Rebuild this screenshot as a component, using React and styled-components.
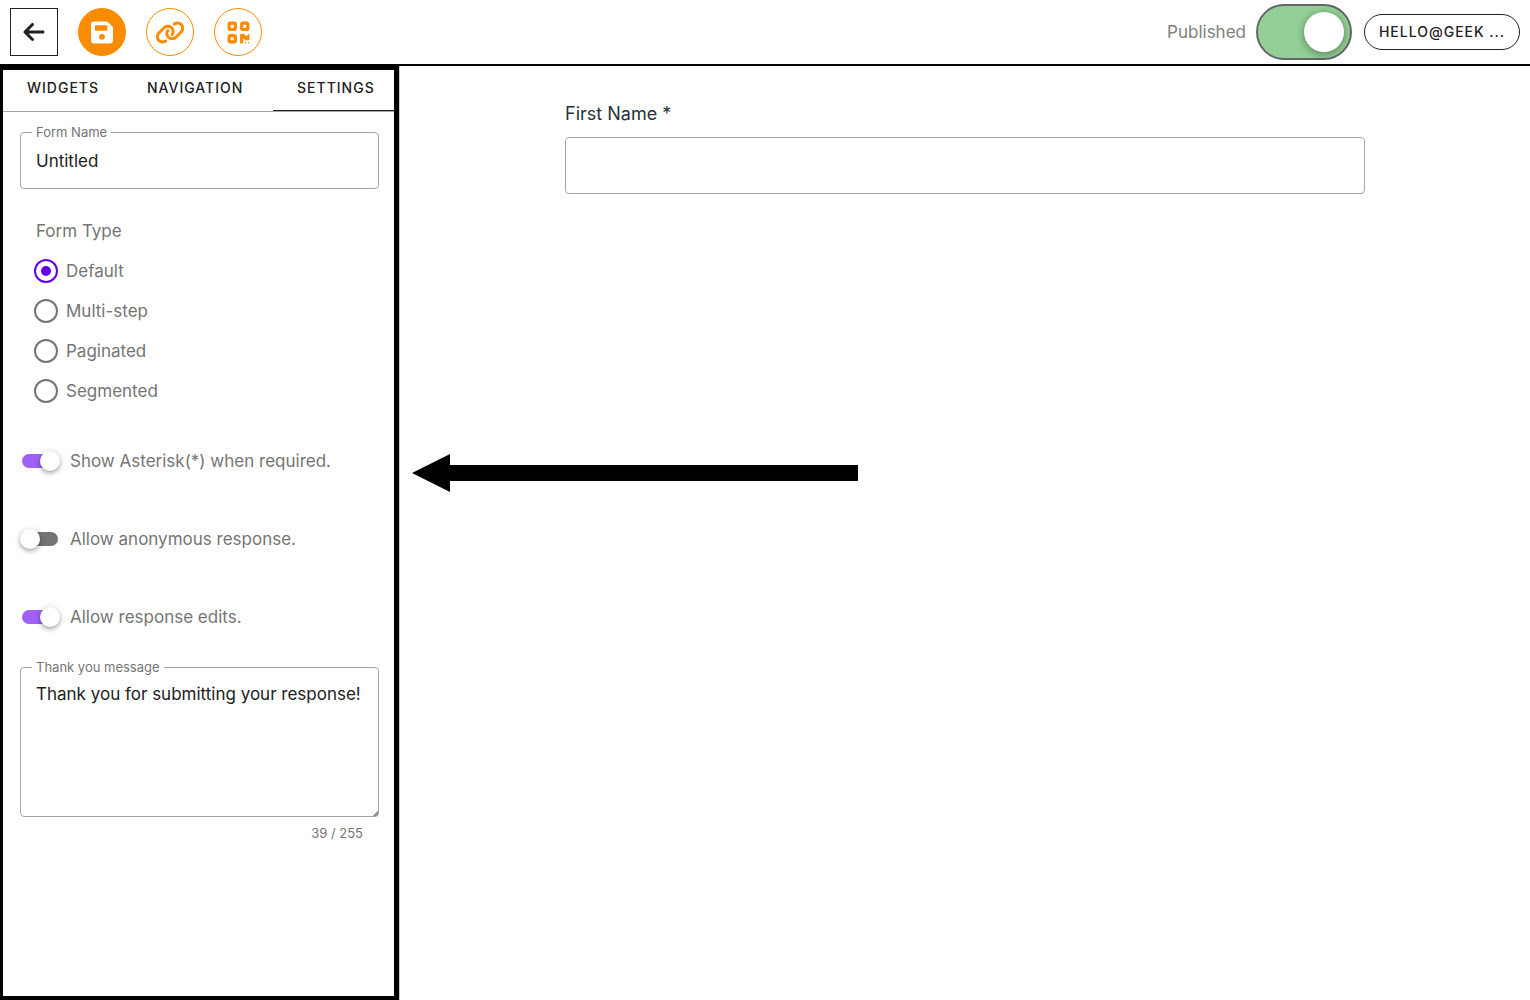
import { useState } from "react";
import styled, { createGlobalStyle } from "styled-components";
import { FaArrowLeft, FaLink, FaQrcode } from "react-icons/fa6";

const formTypes = ["Default", "Multi-step", "Paginated", "Segmented"];
const tabs = ["Widgets", "Navigation", "Settings"];
const MAX_MESSAGE = 255;

const SaveIcon = () => (
  <svg viewBox="0 0 22 22" fill="currentColor" aria-hidden="true">
    <path
      fillRule="evenodd"
      d="M3 0H16.2L22 5.6V19a3 3 0 0 1-3 3H3a3 3 0 0 1-3-3V3a3 3 0 0 1 3-3Z
        M4.6 3.8a.6.6 0 0 0-.6.6v4.2a.6.6 0 0 0 .6.6h11.2a.6.6 0 0 0 .6-.6V4.4a.6.6 0 0 0-.6-.6Z
        M11 12.4a2.9 2.9 0 1 0 0 5.8a2.9 2.9 0 1 0 0-5.8Z"
    />
  </svg>
);

const App = () => {
  const [tab, setTab] = useState("Settings");
  const [published, setPublished] = useState(true);
  const [name, setName] = useState("Untitled");
  const [formType, setFormType] = useState("Default");
  const [asterisk, setAsterisk] = useState(true);
  const [anonymous, setAnonymous] = useState(false);
  const [edits, setEdits] = useState(true);
  const [message, setMessage] = useState("Thank you for submitting your response!");

  return (
    <Page>
      <GlobalStyle />
      <Header>
        <Actions>
          <BackButton type="button" aria-label="Back">
            <FaArrowLeft />
          </BackButton>
          <RoundButton type="button" aria-label="Save" $filled $icon="22px">
            <SaveIcon />
          </RoundButton>
          <RoundButton type="button" aria-label="Copy link" $icon="30px">
            <FaLink />
          </RoundButton>
          <RoundButton type="button" aria-label="QR code" $icon="25px">
            <FaQrcode />
          </RoundButton>
        </Actions>
        <Account>
          <PublishLabel>
            Published
            <PublishSwitch
              type="checkbox"
              role="switch"
              checked={published}
              onChange={(e) => setPublished(e.target.checked)}
            />
          </PublishLabel>
          <AccountButton type="button">HELLO@GEEK ...</AccountButton>
        </Account>
      </Header>

      <Body>
        <Sidebar>
          <Tabs role="tablist">
            {tabs.map((t) => (
              <Tab
                key={t}
                type="button"
                role="tab"
                aria-selected={t === tab}
                $active={t === tab}
                onClick={() => setTab(t)}
              >
                {t}
              </Tab>
            ))}
          </Tabs>

          <Settings>
            <Outlined>
              <FloatingLabel htmlFor="form-name">Form Name</FloatingLabel>
              <TextInput
                id="form-name"
                type="text"
                value={name}
                onChange={(e) => setName(e.target.value)}
              />
            </Outlined>

            <RadioGroup role="radiogroup" aria-labelledby="form-type">
              <GroupTitle id="form-type">Form Type</GroupTitle>
              {formTypes.map((type) => (
                <RadioLabel key={type}>
                  <Radio
                    type="radio"
                    name="form-type"
                    checked={formType === type}
                    onChange={() => setFormType(type)}
                  />
                  {type}
                </RadioLabel>
              ))}
            </RadioGroup>

            <Switches>
              <SwitchLabel>
                <Switch
                  type="checkbox"
                  role="switch"
                  checked={asterisk}
                  onChange={(e) => setAsterisk(e.target.checked)}
                />
                Show Asterisk(*) when required.
              </SwitchLabel>
              <SwitchLabel>
                <Switch
                  type="checkbox"
                  role="switch"
                  checked={anonymous}
                  onChange={(e) => setAnonymous(e.target.checked)}
                />
                Allow anonymous response.
              </SwitchLabel>
              <SwitchLabel>
                <Switch
                  type="checkbox"
                  role="switch"
                  checked={edits}
                  onChange={(e) => setEdits(e.target.checked)}
                />
                Allow response edits.
              </SwitchLabel>
            </Switches>

            <Outlined>
              <FloatingLabel htmlFor="thanks">Thank you message</FloatingLabel>
              <TextArea
                id="thanks"
                maxLength={MAX_MESSAGE}
                value={message}
                onChange={(e) => setMessage(e.target.value)}
              />
            </Outlined>
            <Counter>
              {message.length} / {MAX_MESSAGE}
            </Counter>
          </Settings>
        </Sidebar>

        <Canvas>
          <Field>
            <FieldLabel htmlFor="first-name">First Name *</FieldLabel>
            <TextInput id="first-name" type="text" required />
          </Field>
          <Pointer viewBox="0 0 446 38" aria-hidden="true">
            <path d="M0 19 L38 0 V11 H446 V27 H38 V38 Z" />
          </Pointer>
        </Canvas>
      </Body>
    </Page>
  );
};

const GlobalStyle = createGlobalStyle`
  * {
    box-sizing: border-box;
  }
  body {
    margin: 0;
    background: #fff;
    color: #212121;
    font-family: Inter, sans-serif;
    font-size: 17px;
    line-height: 24px;
  }
  button, input, textarea {
    margin: 0;
    font: inherit;
    color: inherit;
  }
  button {
    cursor: pointer;
  }
`;

const Page = styled.div`
  display: flex;
  flex-direction: column;
  min-height: 100vh;
`;

const Header = styled.header`
  display: flex;
  align-items: center;
  justify-content: space-between;
  height: 66px;
  padding: 0 10px;
  border-bottom: 2px solid #000;
`;

const Actions = styled.div`
  display: flex;
  gap: 20px;
`;

const BackButton = styled.button`
  display: flex;
  align-items: center;
  justify-content: center;
  width: 48px;
  height: 48px;
  padding: 0;
  border: 1px solid #212121;
  background: #fff;
  font-size: 24px;
`;

const RoundButton = styled(BackButton)`
  border-color: #fb8c00;
  border-radius: 50%;
  background: ${(p) => (p.$filled ? "#fb8c00" : "#fff")};
  color: ${(p) => (p.$filled ? "#fff" : "#fb8c00")};

  svg {
    width: ${(p) => p.$icon};
    height: 25px;
  }
`;

const Account = styled.div`
  display: flex;
  align-items: center;
  gap: 12px;
`;

const PublishLabel = styled.label`
  display: flex;
  align-items: center;
  gap: 10px;
  color: #808080;
`;

const PublishSwitch = styled.input`
  appearance: none;
  display: flex;
  align-items: center;
  width: 96px;
  height: 56px;
  padding: 0 6px;
  border: 2px solid #666;
  border-radius: 28px;
  background: #ccc;

  &::before {
    content: "";
    width: 40px;
    height: 40px;
    border-radius: 50%;
    background: #fff;
    box-shadow: 0 2px 8px rgba(0, 0, 0, 0.4);
  }
  &:checked {
    justify-content: flex-end;
    background: #93cf96;
  }
`;

const AccountButton = styled.button`
  height: 36px;
  width: 156px;
  padding: 0;
  border: 1px solid #212121;
  border-radius: 18px;
  background: #fff;
  font-size: 14px;
  font-weight: 500;
  letter-spacing: 1px;
`;

const Body = styled.div`
  display: flex;
  flex: 1;
`;

const Sidebar = styled.aside`
  flex: none;
  width: 399px;
  border: solid #000;
  border-width: 4px 5px 4px 3px;
`;

const Tabs = styled.div`
  display: grid;
  grid-template-columns: 120px 150px 1fr;
  height: 42px;
  border-bottom: 1px solid #a6a6a6;
`;

const Tab = styled.button`
  padding: 0 0 4px 24px;
  border: none;
  border-bottom: 1px solid ${(p) => (p.$active ? "#212121" : "transparent")};
  background: none;
  font-size: 14px;
  font-weight: 500;
  letter-spacing: 1px;
  text-align: left;
  text-transform: uppercase;
`;

const Settings = styled.div`
  padding: 20px 15px 20px 17px;
`;

const Outlined = styled.div`
  position: relative;
`;

const FloatingLabel = styled.label`
  position: absolute;
  top: -8px;
  left: 12px;
  padding: 0 4px;
  background: #fff;
  color: #757575;
  font-size: 13px;
  line-height: 16px;
`;

const TextInput = styled.input`
  display: block;
  width: 100%;
  height: 57px;
  padding: 0 15px;
  border: 1px solid #a6a6a6;
  border-radius: 4px;
  background: #fff;
`;

const TextArea = styled.textarea`
  display: block;
  width: 100%;
  height: 150px;
  padding: 14px 15px;
  border: 1px solid #a6a6a6;
  border-radius: 4px;
  background: #fff;
  resize: vertical;

  &::-webkit-resizer {
    background: linear-gradient(135deg, transparent 83%, #999 83%);
  }
`;

const RadioGroup = styled.div`
  padding: 22px 14px 0;
  color: #757575;
`;

const GroupTitle = styled.div`
  padding: 8px 2px;
`;

const RadioLabel = styled.label`
  display: flex;
  align-items: center;
  gap: 8px;
  height: 40px;
`;

const Radio = styled.input`
  appearance: none;
  display: grid;
  place-items: center;
  width: 24px;
  height: 24px;
  border: 2px solid #757575;
  border-radius: 50%;

  &:checked {
    border-color: #6200ee;
  }
  &:checked::before {
    content: "";
    width: 10px;
    height: 10px;
    border-radius: 50%;
    background: #6200ee;
  }
`;

const Switches = styled.div`
  display: grid;
  gap: 38px;
  padding: 30px 0;
  color: #757575;
`;

const SwitchLabel = styled.label`
  display: flex;
  align-items: center;
  gap: 12px;
  height: 40px;
  padding-left: 2px;
`;

const Switch = styled.input`
  appearance: none;
  display: flex;
  align-items: center;
  width: 36px;
  height: 14px;
  border-radius: 7px;
  background: #757575;

  &::before {
    content: "";
    flex: none;
    width: 20px;
    height: 20px;
    margin: 0 -2px;
    border-radius: 50%;
    background: #fff;
    box-shadow: 0 2px 4px rgba(0, 0, 0, 0.3), 0 1px 8px rgba(0, 0, 0, 0.12);
  }
  &:checked {
    justify-content: flex-end;
    background: #a062f5;
  }
`;

const Counter = styled.div`
  padding: 8px 16px;
  color: #757575;
  font-size: 13px;
  line-height: 16px;
  text-align: right;
`;

const Canvas = styled.main`
  position: relative;
  flex: 1;
  padding: 36px 20px;
  border-left: 1px solid #ccc;
`;

const Field = styled.div`
  max-width: 800px;
  margin: 0 auto;
`;

const FieldLabel = styled.label`
  display: block;
  padding-bottom: 11px;
  color: #263238;
  font-size: 18px;
`;

/* arrow lying over the canvas, pointing at the settings panel */
const Pointer = styled.svg`
  position: absolute;
  top: 388px;
  left: 12px;
  width: 446px;
  height: 38px;
`;

export default App;
